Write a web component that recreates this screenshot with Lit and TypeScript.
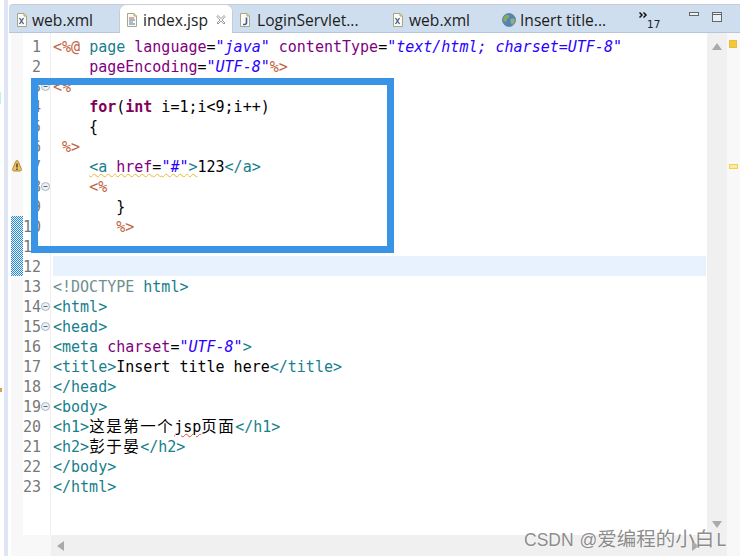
import { LitElement, html, css, svg } from "lit";
import { customElement } from "lit/decorators.js";

type Seg = [string, string];
const L: Seg[][] = [
  [["d","<%@"],["p"," "],["t","page "],["a","language"],["p","="],["v",'"java"'],["p"," "],["a","contentType"],["p","="],["v",'"text/html; charset=UTF-8"']],
  [["p","    "],["a","pageEncoding"],["p","="],["v",'"UTF-8"'],["d","%>"]],
  [["d","<%"]],
  [["p","    "],["k","for"],["p","("],["k","int"],["p"," i=1;i<9;i++)"]],
  [["p","    {"]],
  [["p"," "],["d","%>"]],
  [["p","    "],["s",'<a '],["a","href"],["p","="],["v",'"#"'],["t",">"],["p","123"],["t","</a>"]],
  [["p","    "],["d","<%"]],
  [["p","       }"]],
  [["p","       "],["d","%>"]],
  [],
  [],
  [["g","<!DOCTYPE "],["t","html>"]],
  [["t","<html>"]],
  [["t","<head>"]],
  [["t","<meta "],["a","charset"],["p","="],["v",'"UTF-8"'],["t",">"]],
  [["t","<title>"],["p","Insert title here"],["t","</title>"]],
  [["t","</head>"]],
  [["t","<body>"]],
  [["t","<h1>"],["c","这是第一个"],["e","jsp"],["c","页面"],["t","</h1>"]],
  [["t","<h2>"],["c","彭于晏"],["t","</h2>"]],
  [["t","</body>"]],
  [["t","</html>"]],
];
const FOLDS = new Set([3, 8, 14, 15, 19]);

const docIcon = (inner: unknown) => svg`<svg class="ic" viewBox="0 0 12 14" width="12" height="14">
  <path d="M1.5.5h6.5l2.5 2.500v10.500h-9z" fill="#fbfbf6" stroke="#a8a58c"/>
  <path d="M8 .5v2.500h2.500" fill="#e8dfa8" stroke="#b5a45a"/>${inner}</svg>`;
const xmlIcon = () => docIcon(svg`<path d="M3.500 5l4 6M7.500 5l-4 6" stroke="#3d5a80" stroke-width="1.300" fill="none"/>`);
const jspIcon = () => docIcon(svg`<path d="M3 5h5" stroke="#c0504d"/><path d="M3 7h6" stroke="#4f6fb0"/><path d="M3 9h4" stroke="#5f9060"/><path d="M3 11h6" stroke="#4f6fb0"/>`);
const javaIcon = () => docIcon(svg`<path d="M7.500 4.500v5q0 2-2 2h-1.500" stroke="#3a5fa0" stroke-width="1.600" fill="none"/>`);
const globeIcon = () => svg`<svg class="ic" viewBox="0 0 14 14" width="14" height="14">
  <circle cx="7" cy="7" r="6.500" fill="#4f86b8"/>
  <path d="M3 2.500q3-1.500 4 0t-1 3-2 3-3-1.500q-.5-3 2-4.500z" fill="#8aa860"/>
  <path d="M8.500 6q3-1 4.500.5.200 3-2.500 5.500-2.500-2-2-6z" fill="#9cab72"/>
  <circle cx="7" cy="7" r="6.500" fill="none" stroke="#5a7f9c" stroke-width=".8"/></svg>`;

@customElement("app-root")
export class AppRoot extends LitElement {
  static styles = css`
    :host { display: block; position: relative; width: 740px; height: 556px; overflow: hidden; background: #fff; }
    .frame { height: 556px; box-sizing: border-box; margin-left: 4px; border-left: 4px solid #e0e5f5; padding-left: 1px; padding-top: 4px; display: flex; flex-direction: column; }
    .tabs { height: 29px; flex: none; box-sizing: border-box; border-top: 1px solid #c9cbd8; border-bottom: 1px solid #b9c6d6; background: #cfdeee; display: flex; align-items: stretch; font: 15.600px "Open Sans", sans-serif; color: #1c1c1c; position: relative; border-top-left-radius: 4px; }
    .tab { display: flex; align-items: center; box-sizing: border-box; padding-top: 2px; white-space: nowrap; }
    .tab .ic { flex: none; }
    .t1 { width: 110px; padding-left: 7px; gap: 4px; }
    .t2 { width: 114px; padding-left: 6px; gap: 5px; background: #fff; height: 29px; margin-top: -1px; border: 1px solid #c6cdd6; border-bottom: 0; border-radius: 7px 7px 0 0; }
    .t3 { width: 153px; padding-left: 6px; gap: 6px; }
    .t4 { width: 109px; padding-left: 6px; gap: 5px; }
    .t5 { width: 136px; padding-left: 7px; gap: 4px; }
    .t2 .close { margin-left: 3px; }
    .chev { width: 58px; box-sizing: border-box; padding: 7px 0 0 8px; display: flex; flex-direction: column; color: #222; }
    .chev span { font: 10.500px/10px "DejaVu Sans", sans-serif; padding: 1px 0 0 8px; }
    .win { display: flex; gap: 13px; padding-top: 7px; align-items: flex-start; }
    .edit { flex: 1; min-height: 0; margin-left: 2px; display: grid; grid-template-columns: 12px 28px 1fr 20px 13px; grid-template-rows: 1fr 21px; background: #fff; }
    .ruler { background: #f8f8f8; position: relative; grid-row: 1 / 3; }
    .hatch { position: absolute; left: 0; right: 0; top: 183px; height: 60px; background: repeating-conic-gradient(#2f86d0 0 25%, #e8f2fb 0 50%) 0 0 / 2px 2px; }
    .warn { position: absolute; left: 1px; top: 127px; }
    .nums { padding-top: 3px; font: 15px/22px "DejaVu Sans Mono", monospace; color: #787878; border-right: 1px solid #f0f0f0; grid-row: 1 / 2; }
    .n { height: 20px; display: flex; align-items: flex-start; }
    .n b { width: 18px; text-align: right; font-weight: 400; }
    .fold { margin-top: 6px; flex: none; }
    .bl { background: #f8f8f8; grid-column: 2; grid-row: 2; }
    .code { padding: 3px 0 0 2px; font: 15px/22px "DejaVu Sans Mono", monospace; color: #000; white-space: pre; position: relative; overflow: hidden; min-width: 0; }
    .ln { height: 20px; }
    .ln.cur { background: #e8f2fe; margin-right: 1px; }
    .d { color: #c4643f; } .t { color: #17808c; } .a { color: #7f007f; } .v { color: #2a00ff; font-style: italic; }
    .k { color: #7f0055; font-weight: 700; } .g { color: #6f8f8f; }
    .s { color: #17808c; }
    .c { font-family: "Noto Sans CJK SC", sans-serif; font-size: 15.500px; letter-spacing: 1.500px; line-height: 0; }
    .e { text-decoration: underline wavy #e05030 1px; text-underline-offset: 1px; }
    .warnline { text-decoration: underline wavy #e8b830 1px; text-underline-offset: 1px; }
    .vs { background: #f0f0f0; position: relative; grid-row: 1 / 3; grid-column: 4; }
    .ov { background: #f8f8f8; position: relative; grid-row: 1 / 3; grid-column: 5; }
    .hs { background: #f0f0f0; grid-column: 3; grid-row: 2; position: relative; }
    .m1 { position: absolute; left: 2px; top: 7px; width: 8px; height: 8px; box-sizing: border-box; background: #f6c733; border: 1px solid #e3bb45; }
    .m2 { position: absolute; left: 2px; top: 131px; width: 9px; height: 5px; box-sizing: border-box; background: #fdeb9c; border: 1px solid #f5cf53; }
    .arr { position: absolute; }
    .up { left: 5px; top: 10px; }
    .down { left: 5px; top: 488px; }
    .left { left: 6px; top: 6px; }
    .right { left: 641px; top: 6px; }
    .box { position: absolute; left: 31px; top: 78px; width: 363px; height: 175px; box-sizing: border-box; border: 7px solid #3a94e6; }
    .wm { position: absolute; left: 524px; top: 526px; font: 17.500px/24px "Liberation Sans", sans-serif; color: rgba(110,110,110,.8); text-shadow: 0 0 2px #fff; white-space: nowrap; display: flex; align-items: baseline; }
    .wm .cj { font: 19.500px/24px "Noto Sans CJK SC", sans-serif; margin-right: 2px; }
    .wm .at { margin-left: 6px; }
    .dot { position: absolute; left: 0; width: 1px; height: 12px; background: #bfeef5; top: 92px; }
    .dot2 { position: absolute; left: 0; width: 2px; height: 4px; background: #d8a060; top: 388px; }
  `;

  private seg(s: Seg) {
    return html`<span class=${s[0]}>${s[1]}</span>`;
  }

  private line(segs: Seg[], i: number) {
    if (i === 6) {
      return html`<div class="ln"><span>    </span><span class="warnline">${segs.slice(1, 6).map((s) => this.seg(s))}</span>${segs.slice(6).map((s) => this.seg(s))}</div>`;
    }
    return html`<div class="ln ${i === 11 ? "cur" : ""}">${segs.map((s) => this.seg(s))}</div>`;
  }

  render() {
    return html`
      <div class="frame">
        <div class="tabs">
          <div class="tab t1">${xmlIcon()}<span>web.xml</span></div>
          <div class="tab t2">${jspIcon()}<span>index.jsp</span>
            <svg class="close" width="10" height="10" viewBox="0 0 10 10"><path d="M1 1.500l1-1 3 3 3-3 1 1-3 3.500 3 3-1 1-3-3-3 3-1-1 3-3z" fill="#fff" stroke="#9a9a9a"/></svg>
          </div>
          <div class="tab t3">${javaIcon()}<span>LoginServlet...</span></div>
          <div class="tab t4">${xmlIcon()}<span>web.xml</span></div>
          <div class="tab t5">${globeIcon()}<span>Insert title...</span></div>
          <div class="chev">
            <svg width="9" height="6" viewBox="0 0 9 6"><path d="M.5.5L3 3 .5 5.500M4.500.5L7 3 4.500 5.500" fill="none" stroke="#111" stroke-width="1.500"/></svg>
            <span>17</span>
          </div>
          <div class="win">
            <svg width="10" height="4" viewBox="0 0 10 4"><rect x=".5" y=".5" width="9" height="3" fill="#eaf0f6" stroke="#666"/></svg>
            <svg width="10" height="10" viewBox="0 0 10 10"><rect x=".5" y=".5" width="9" height="9" fill="#eaf0f6" stroke="#666"/><path d="M1 2.500h8" stroke="#666"/></svg>
          </div>
        </div>
        <div class="edit">
          <div class="ruler">
            <div class="hatch"></div>
            <svg class="warn" width="10" height="12" viewBox="0 0 10 12"><path d="M5 .5q1 0 1.500 1.500l3 7.500q0 1.500-1.500 1.500h-6q-1.500 0-1.500-1.500l3-7.500q.5-1.500 1.500-1.500z" fill="#f0c060" stroke="#b58a3a"/><path d="M5 3.500v4M5 8.500v1.500" stroke="#333" stroke-width="1.300"/></svg>
          </div>
          <div class="nums">
            ${L.map((_, i) => html`<div class="n"><b>${i + 1}</b>${FOLDS.has(i + 1)
              ? html`<svg class="fold" width="9" height="9" viewBox="0 0 9 9"><circle cx="4.500" cy="4.500" r="4" fill="#eef2f5" stroke="#a9b4bf"/><path d="M2.500 4.500h4" stroke="#5a6a78"/></svg>`
              : ""}</div>`)}
          </div>
          <div class="code">${L.map((l, i) => this.line(l, i))}</div>
          <div class="vs">
            <svg class="arr up" width="10" height="7" viewBox="0 0 10 7"><path d="M5 0l5 7H0z" fill="#aaa"/></svg>
            <svg class="arr down" width="10" height="7" viewBox="0 0 10 7"><path d="M5 7L10 0H0z" fill="#aaa"/></svg>
          </div>
          <div class="ov"><div class="m1"></div><div class="m2"></div></div>
          <div class="bl"></div>
          <div class="hs">
            <svg class="arr left" width="7" height="10" viewBox="0 0 7 10"><path d="M0 5l7-5v10z" fill="#aaa"/></svg>
            <svg class="arr right" width="7" height="10" viewBox="0 0 7 10"><path d="M7 5L0 0v10z" fill="#aaa"/></svg>
          </div>
        </div>
      </div>
      <div class="box"></div>
      <div class="wm"><span>CSDN</span><span class="at">@</span><span class="cj">爱编程的小白</span><span>L</span></div>
      <div class="dot"></div><div class="dot2"></div>
    `;
  }
}
